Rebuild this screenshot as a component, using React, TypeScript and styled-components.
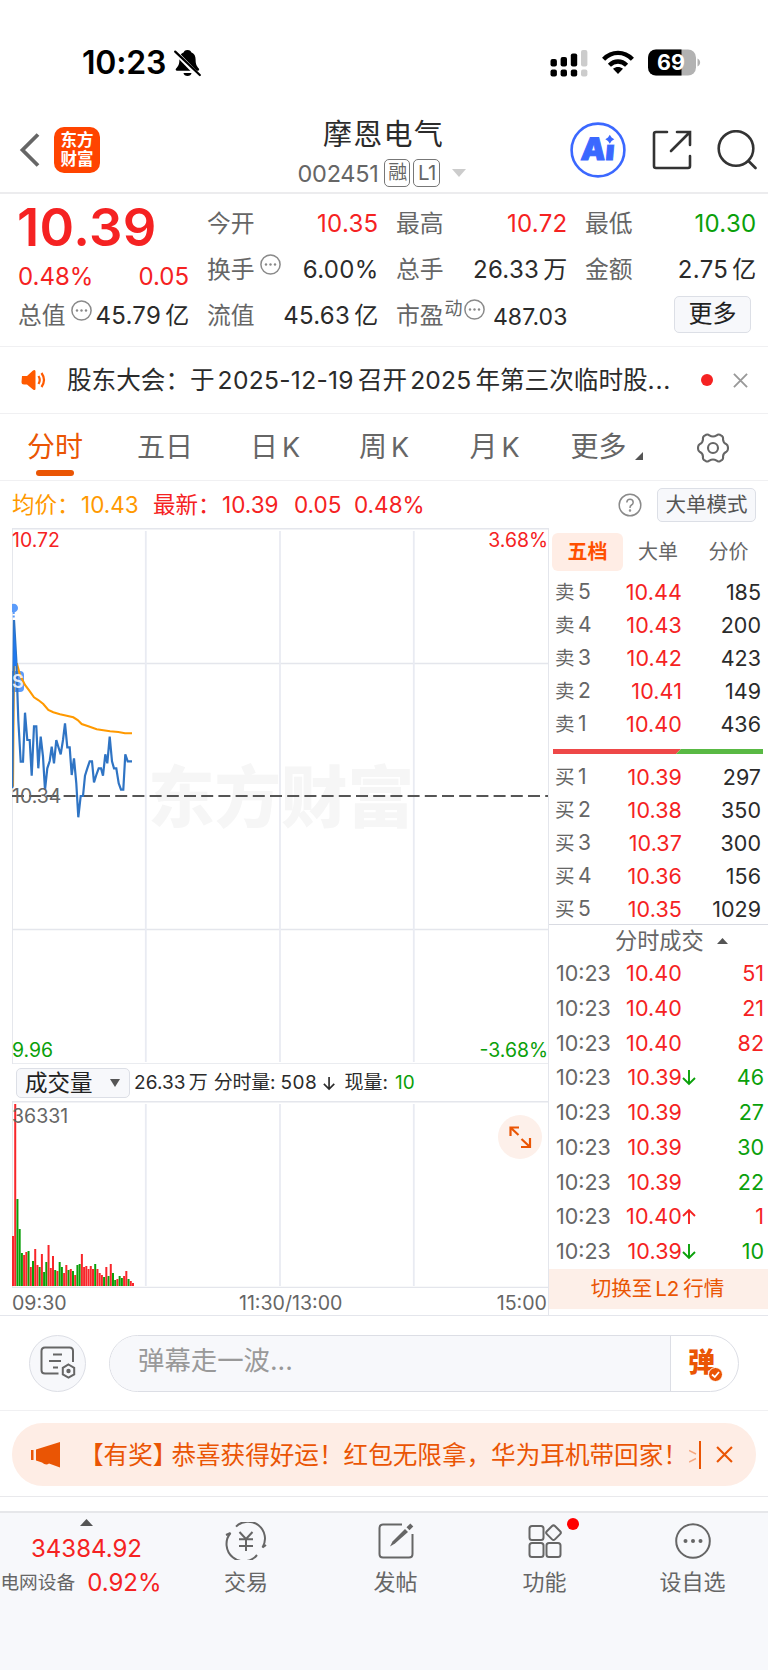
import React from "react";
import styled, { createGlobalStyle } from "styled-components";

const RED = "#f52222";
const GREEN = "#0aa00a";
const ORANGE = "#ea5504";
const GRAY = "#666";
const DARK = "#2b2b2b";
const LINE = "#e4e6ec";
const FONT = `Inter, "Noto Sans CJK SC", sans-serif`;

const Global = createGlobalStyle`
  *, *::before, *::after { box-sizing: border-box; }
  body { margin: 0; background: #fff; }
`;

const Screen = styled.main`
  width: 768px;
  height: 1670px;
  overflow: hidden;
  display: flex;
  flex-direction: column;
  background: #fff;
  color: ${DARK};
  font-family: ${FONT};
  text-autospace: no-autospace;
  white-space: nowrap;
  svg { display: block; flex: none; }
  svg text { font-family: ${FONT}; }
`;

/* ---------- status bar ---------- */
const StatusBar = styled.div`
  height: 106px;
  padding: 19px 67px 0 82px;
  display: flex;
  align-items: center;
  justify-content: space-between;
  color: #000;
`;
const Clock = styled.div`
  display: flex;
  align-items: center;
  gap: 8px;
  font-size: 32px;
  font-weight: 600;
  line-height: 40px;
  letter-spacing: -0.2px;
`;
const StatusIcons = styled.div`
  display: flex;
  align-items: center;
  gap: 14px;
`;

/* ---------- header ---------- */
const Header = styled.header`
  height: 88px;
  padding: 0 11px 0 18px;
  display: grid;
  grid-template-columns: 182px 1fr 190px;
  border-bottom: 2px solid #ececee;
`;
const HeaderLeft = styled.div`
  display: flex;
  align-items: center;
  gap: 13px;
  padding-top: 1px;
`;
const Logo = styled.div`
  width: 46px;
  height: 46px;
  border-radius: 10px;
  background: #ff4400;
  color: #fff;
  font-size: 16.5px;
  line-height: 19px;
  font-weight: 700;
  padding: 4px 0 0 0;
  text-align: center;
`;
const HeaderTitle = styled.div`
  display: flex;
  flex-direction: column;
  align-items: center;
  padding-top: 11px;
`;
const StockName = styled.h1`
  margin: 0;
  font-size: 29px;
  line-height: 36px;
  font-weight: 400;
  letter-spacing: 1.2px;
`;
const StockMeta = styled.div`
  display: flex;
  align-items: center;
  height: 32px;
  margin-top: 4px;
  margin-left: -3px;
  font-size: 23.5px;
  color: ${GRAY};
  gap: 3px;
  letter-spacing: -0.3px;
`;
const StockCode = styled.span`
  margin-right: 3px;
`;
const Badge = styled.span<{ $w: number }>`
  width: ${(p) => p.$w}px;
  height: 28px;
  border: 1.5px solid #777;
  border-radius: 5px;
  font-size: ${(p) => (p.$w > 26 ? 20.5 : 19)}px;
  line-height: 25px;
  text-align: center;
  letter-spacing: -0.5px;
`;
const CaretSlot = styled.span`
  padding: 0 0 0 9px;
`;
const HeaderActions = styled.div`
  display: flex;
  align-items: center;
  justify-content: flex-end;
  gap: 25.5px;
  padding-top: 1px;
`;

/* ---------- quote ---------- */
const Quote = styled.section`
  height: 153px;
  padding: 0 13px 0 18px;
  display: grid;
  grid-template-columns: repeat(4, 170px);
  column-gap: 19px;
  border-bottom: 1px solid #f0f0f2;
`;
const QuoteCol = styled.div`
  padding-top: 7px;
`;
const BigPrice = styled.div`
  height: 53px;
  margin-left: -1px;
  line-height: 52px;
  font-size: 52.5px;
  font-weight: 600;
  color: ${RED};
  letter-spacing: 0.4px;
`;
const ChangeLine = styled.div`
  display: flex;
  justify-content: space-between;
  height: 46px;
  margin-right: -1px;
  line-height: 46px;
  font-size: 24px;
  color: ${RED};
`;
const Cell = styled.div`
  display: flex;
  align-items: center;
  justify-content: space-between;
  height: 46px;
  line-height: 46px;
  font-size: 24px;
`;
const CapCell = styled(Cell)`
  height: 32px;
  line-height: 32px;
`;
const Label = styled.span`
  display: flex;
  align-items: center;
  color: ${GRAY};
  font-size: 23.8px;
`;
const Sup = styled.span`
  display: flex;
  align-items: center;
  gap: 1px;
  margin: -14px 0 0 1px;
  font-size: 18px;
`;
const SupIcon = styled.span`
  margin: -11px 0 0 5px;
`;
const Value = styled.span<{ $c?: string }>`
  display: flex;
  gap: 4px;
  margin-right: -1.5px;
  letter-spacing: 0.3px;
  color: ${(p) => p.$c || DARK};
`;
const SmallValue = styled(Value)`
  padding-top: 1px;
  font-size: 23px;
  letter-spacing: 0.1px;
`;
const MoreButton = styled.button`
  width: 77px;
  height: 37px;
  margin: -4px 4px 0 auto;
  padding: 0;
  border: 1.5px solid #dcdfe6;
  border-radius: 5px;
  background: #f7f8fb;
  font: 400 24px/32px ${FONT};
  color: #222;
`;

/* ---------- news ---------- */
const News = styled.section`
  height: 67px;
  padding: 0 19px 0 20px;
  display: flex;
  align-items: center;
  border-bottom: 1px solid #f0f0f2;
`;
const NewsText = styled.p`
  margin: 0 0 0 19px;
  width: 634px;
  display: flex;
  font-size: 24.6px;
  line-height: 40px;
`;
const Digits = styled.span<{ $l?: number; $r?: number; $s?: number }>`
  margin-left: ${(p) => p.$l ?? 3}px;
  margin-right: ${(p) => p.$r ?? 4}px;
  letter-spacing: ${(p) => p.$s ?? 0}px;
`;
const RedDot = styled.i`
  width: 12px;
  height: 12px;
  margin-right: 20px;
  border-radius: 50%;
  background: ${RED};
`;

/* ---------- period tabs ---------- */
const Periods = styled.nav`
  height: 67px;
  display: grid;
  grid-template-columns: 110px 110px 110px 108px 113px 111px 1fr;
  border-bottom: 1px solid #f0f0f2;
  font-size: 28px;
  line-height: 67px;
  color: ${GRAY};
`;
const Period = styled.div<{ $on?: boolean }>`
  position: relative;
  display: flex;
  justify-content: center;
  gap: 4px;
  color: ${(p) => (p.$on ? ORANGE : GRAY)};
  ${(p) =>
    p.$on &&
    `&::after { content: ""; position: absolute; left: 36px; bottom: 5px; width: 38px; height: 6px; border-radius: 3px; background: ${ORANGE}; }`}
`;
const Latin = styled.span`
  font-size: 27px;
`;
const GearSlot = styled.div`
  display: flex;
  align-items: center;
  justify-content: center;
  padding-right: 4px;
`;
const CornerSlot = styled.span`
  padding: 38px 0 0 4px;
`;

/* ---------- indicators ---------- */
const Indicators = styled.div`
  height: 47px;
  padding: 0 12px;
  display: flex;
  align-items: center;
  font-size: 22.5px;
  line-height: 40px;
  color: ${RED};
`;
const Item = styled.span<{ $c?: string; $w: number }>`
  width: ${(p) => p.$w}px;
  color: ${(p) => p.$c || RED};
`;
const ModeButton = styled(MoreButton)`
  width: 99px;
  height: 34px;
  margin: 0 0 0 15px;
  font-size: 20.5px;
  line-height: 30px;
  color: #555;
`;
const HelpSlot = styled.span`
  margin-left: auto;
`;

/* ---------- chart area ---------- */
const Body = styled.section`
  height: 788px;
  display: grid;
  grid-template-columns: 549px 219px;
  border-bottom: 1px solid ${LINE};
`;
const ChartCol = styled.div`
  padding-left: 12px;
  border-right: 1px solid ${LINE};
`;
const VolumeBar = styled.div`
  height: 37px;
  padding: 1px 0 0 4px;
  display: flex;
  align-items: center;
  font-size: 19px;
  line-height: 32px;
`;
const VolumeSelect = styled.div`
  width: 114px;
  height: 30px;
  margin-right: 4px;
  padding: 0 9px 0 8px;
  display: flex;
  align-items: center;
  justify-content: space-between;
  border: 1.5px solid #dcdfe6;
  border-radius: 5px;
  background: #f7f8fb;
  font-size: 22.5px;
  color: #222;
`;
const Axis = styled.div`
  height: 27px;
  display: flex;
  justify-content: space-between;
  padding-right: 1px;
  font-size: 19.6px;
  line-height: 31px;
  color: ${GRAY};
`;
const MidTime = styled.span`
  margin-left: 18px;
`;

const Side = styled.aside`
  display: flex;
  flex-direction: column;
`;
const BookTabs = styled.div`
  margin: 5px 0 0 3px;
  height: 38px;
  display: grid;
  grid-template-columns: 71px 70px 71px;
`;
const BookTab = styled.div<{ $on?: boolean }>`
  border-radius: 6px;
  background: ${(p) => (p.$on ? "#ffede5" : "transparent")};
  color: ${(p) => (p.$on ? "#ff5000" : GRAY)};
  font-weight: ${(p) => (p.$on ? 700 : 400)};
  font-size: 20px;
  line-height: 38px;
  text-align: center;
`;
const Level = styled.div`
  height: 32.9px;
  line-height: 32.9px;
  display: grid;
  grid-template-columns: 22px 28px 77px 1fr;
  padding: 0 7px 0 6px;
  font-size: 21.5px;
`;
const LevelName = styled.span`
  color: ${GRAY};
  font-size: 19.5px;
`;
const LevelNo = styled.span`
  color: ${GRAY};
  padding-left: 1px;
  font-size: 21px;
`;
const Price = styled.span`
  color: ${RED};
  text-align: right;
  letter-spacing: 0.1px;
`;
const Qty = styled.span<{ $c?: string }>`
  color: ${(p) => p.$c || DARK};
  text-align: right;
`;
const Sells = styled.div`
  padding-top: 5px;
  height: 178px;
`;
const Buys = styled.div`
  height: 171px;
  padding-top: 7px;
  border-bottom: 1px solid #d9dbe2;
`;
const TicksTitle = styled.div`
  height: 31px;
  padding-left: 66px;
  display: flex;
  align-items: center;
  gap: 13px;
  font-size: 22.2px;
  line-height: 31px;
  color: ${GRAY};
`;
const Tick = styled.div`
  height: 34.75px;
  line-height: 34.75px;
  display: grid;
  grid-template-columns: 57px 69px 15px 1fr;
  align-items: center;
  padding: 0 4px 0 7px;
  font-size: 21.5px;
`;
const TickTime = styled.span`
  color: ${GRAY};
`;
const L2Banner = styled.div`
  height: 40px;
  display: flex;
  justify-content: center;
  padding-right: 2px;
  background: #fdefe8;
  color: ${ORANGE};
  font-size: 20.5px;
  line-height: 39px;
`;

/* ---------- comment & banner ---------- */
const CommentRow = styled.section`
  height: 95px;
  padding: 0 29px;
  display: flex;
  align-items: center;
  gap: 23px;
  border-bottom: 1px solid #f0f0f2;
`;
const RoundButton = styled.div`
  width: 57px;
  height: 57px;
  display: flex;
  align-items: center;
  justify-content: center;
  border: 1px solid #dcdee5;
  border-radius: 50%;
  background: #f7f8fb;
`;
const CommentBox = styled.div`
  width: 630px;
  height: 57px;
  display: flex;
  overflow: hidden;
  border: 1px solid #dcdee5;
  border-radius: 29px;
`;
const CommentInput = styled.div`
  flex: 1;
  padding-left: 28px;
  background: #f7f8fb;
  color: #999;
  font-size: 26.4px;
  line-height: 49px;
  border-right: 1px solid #dcdee5;
`;
const DanmuButton = styled.div`
  width: 67px;
  position: relative;
  padding-left: 17px;
  color: ${ORANGE};
  font-size: 27px;
  font-weight: 900;
  line-height: 53px;
`;
const CheckMark = styled.span`
  position: absolute;
  left: 37px;
  top: 31px;
`;
const PromoWrap = styled.section`
  height: 86px;
  padding: 12px;
  border-bottom: 1px solid #e9e9ec;
`;
const Promo = styled.div`
  height: 63px;
  padding: 0 23px 0 18px;
  display: flex;
  align-items: center;
  border-radius: 31px;
  background: #feede5;
  color: ${ORANGE};
`;
const PromoText = styled.span`
  margin-left: 18px;
  font-size: 24.6px;
  line-height: 40px;
`;
const PromoTag = styled.span`
  margin-right: -6px;
`;
const PromoEnd = styled.span`
  display: flex;
  align-items: center;
  margin-left: auto;
  gap: 15px;
`;

/* ---------- bottom tab bar ---------- */
const TabBar = styled.footer`
  margin-top: 14px;
  flex: 1;
  padding-top: 3px;
  display: grid;
  grid-template-columns: 171px 150px 149px 149px 147px;
  border-top: 2px solid #e6e7ea;
  background: #f7f8fb;
`;
const IndexTab = styled.div`
  display: flex;
  flex-direction: column;
  align-items: center;
  color: ${RED};
  font-size: 24px;
  padding: 3px 0 0 2px;
`;
const IndexValue = styled.div`
  margin-top: 6px;
  line-height: 34px;
`;
const IndexLine = styled.div`
  display: flex;
  align-items: center;
  gap: 12px;
  line-height: 34px;
  padding-right: 11px;
`;
const IndexName = styled.span`
  font-size: 18.7px;
  color: ${GRAY};
`;
const Tab = styled.div`
  position: relative;
  display: flex;
  flex-direction: column;
  align-items: center;
  padding-top: 3px;
  color: ${GRAY};
  font-size: 22px;
  line-height: 32px;
`;
const TabIcon = styled.div`
  height: 48px;
  display: flex;
  align-items: center;
  margin-bottom: -1px;
  padding-bottom: 4px;
`;
const TabDot = styled.i`
  position: absolute;
  top: 2px;
  left: 97px;
  width: 12px;
  height: 12px;
  border-radius: 50%;
  background: #ff0000;
`;

const Dots = () => (
  <svg width="21" height="21" viewBox="0 0 21 21" fill="#888">
    <circle cx="10.5" cy="10.5" r="9.6" fill="none" stroke="#8a8a8a" strokeWidth="1.5" />
    <circle cx="6" cy="10.5" r="1.2" /><circle cx="10.5" cy="10.5" r="1.2" /><circle cx="15" cy="10.5" r="1.2" />
  </svg>
);

const Cross = ({ color, size }: { color: string; size: number }) => (
  <svg width={size} height={size} viewBox="0 0 16 16" stroke={color} strokeWidth="2" fill="none">
    <path d="M1 1L15 15M15 1L1 15" />
  </svg>
);

const PRICE: number[][] = [[37,805],[42,300],[49,420],[55,600],[62,725],[69,725],[75,578],[82,660],[89,660],[95,767],[102,619],[109,619],[115,745],[122,650],[129,710],[135,810],[142,745],[149,723],[155,680],[162,730],[169,660],[175,680],[182,703],[189,660],[195,610],[202,682],[209,682],[215,765],[222,715],[229,790],[235,892],[242,828],[249,828],[255,767],[262,745],[269,724],[276,724],[282,787],[289,765],[296,745],[303,745],[309,767],[316,703],[322,730],[329,650],[336,724],[342,745],[349,745],[356,790],[363,809],[370,809],[376,703],[383,724],[396,724]];
const AVG: number[][] = [[39,800],[42,430],[51,432],[60,465],[75,495],[88,512],[102,532],[115,540],[130,552],[145,570],[160,577],[180,583],[200,587],[220,592],[233,600],[245,612],[265,619],[290,628],[330,634],[355,636],[375,640],[396,640]];
const toPoints = (list: number[][]) =>
  list.map(([x, y]) => `${(x / 3).toFixed(1)},${(520 + y / 3).toFixed(1)}`).join(" ");

const VOLUMES =
  "50r182r87g57g33g31r34r35g19r25g37r21r19g32r14g24g41r18r30r16g15r24g19g13r21r16g17r15g11r21g22g32r19r20r17r20r17r22g17r13r11r9g19r10g22r13g6g7r10g8g10r15r7g5r3r";
const volumeBars = (VOLUMES.match(/\d+[rg]/g) || []).map((v) => ({
  h: parseInt(v, 10),
  color: v.endsWith("r") ? "#f8262a" : "#0aa00a",
}));

const PriceChart = () => (
  <svg width="536" height="536" viewBox="12 528 536 536">
    <g stroke={LINE} strokeWidth="1.5" fill="none">
      <path d="M12 528.7H548M12.2 528V1064M12 663.5H548M12 929.5H548M12 1064H548" />
      <path d="M145.8 531V1062M280 531V1062M413.8 531V1062" stroke="#e9ebf2" strokeWidth="1.8" />
    </g>
    <text x="148" y="822" fontSize="66.5" fontWeight="900" fill="#f6f6f6">东方财富</text>
    <path d="M12 796H548" stroke="#555" strokeWidth="1.8" strokeDasharray="12 5.2" />
    <circle cx="13.7" cy="608" r="4.3" fill="#5a9bfa" />
    <path d="M13.7 612V618" stroke="#5a9bfa" strokeWidth="2" strokeDasharray="2 1.5" />
    <rect x="2" y="671" width="22" height="21" rx="4" fill="#5a9bfa" />
    <polyline points={toPoints(AVG)} fill="none" stroke="#ff9900" strokeWidth="2.1" />
    <polyline points={toPoints(PRICE)} fill="none" stroke="#2f74c4" strokeWidth="2.2" />
    <path d="M14 624L17 666L13 666Z" fill="#1f78ee" />
    <text x="12" y="688" fontSize="18" fontWeight="600" fill="#fff" fillOpacity="0.85">S</text>
    <g fontSize="19.4">
      <text x="12" y="547.2" fill={RED}>10.72</text>
      <text x="548" y="547.2" fill={RED} textAnchor="end">3.68%</text>
      <text x="12" y="803" fill={GRAY}>10.34</text>
      <text x="12" y="1057.2" fill={GREEN}>9.96</text>
      <text x="548" y="1057.2" fill={GREEN} textAnchor="end">-3.68%</text>
    </g>
  </svg>
);

const VolumeChart = () => (
  <svg width="536" height="187" viewBox="12 1101 536 187">
    <path d="M12 1101.7H548M12.2 1101V1288M12 1287.4H548" stroke={LINE} strokeWidth="1.5" />
    <path d="M145.8 1104V1286M280 1104V1286M413.8 1104V1286" stroke="#e9ebf2" strokeWidth="1.8" />
    {volumeBars.map((b, i) => (
      <rect key={i} x={12 + i * 2.222} y={1286 - b.h} width="2" height={b.h} fill={b.color} />
    ))}
    <text x="12" y="1123" fontSize="19.5" fill={GRAY}>36331</text>
    <circle cx="520" cy="1137" r="22" fill="#fdf0ea" />
    <path d="M518.5 1135L510.5 1127.5M510.5 1136V1127.5H519M521.5 1139L530 1147M530 1138V1147H521" fill="none" stroke={ORANGE} strokeWidth="2.2" />
  </svg>
);

const Arrow = ({ up, color, size = 15 }: { up?: boolean; color: string; size?: number }) => (
  <svg width={size} height={size + 2} viewBox="0 0 15 17" fill="none" stroke={color} strokeWidth="1.9">
    <path d={up ? "M7 16V2M1 8L7 2L13 8" : "M7 1V15M1 9L7 15L13 9"} />
  </svg>
);

const sells = [["5", "10.44", "185"], ["4", "10.43", "200"], ["3", "10.42", "423"], ["2", "10.41", "149"], ["1", "10.40", "436"]];
const buys = [["1", "10.39", "297"], ["2", "10.38", "350"], ["3", "10.37", "300"], ["4", "10.36", "156"], ["5", "10.35", "1029"]];
const ticks: [string, string, string, string?][] = [
  ["10.40", "51", RED], ["10.40", "21", RED], ["10.40", "82", RED],
  ["10.39", "46", GREEN, "down"], ["10.39", "27", GREEN], ["10.39", "30", GREEN],
  ["10.39", "22", GREEN], ["10.40", "1", RED, "up"], ["10.39", "10", GREEN, "down"],
];

const Levels = ({ side, rows }: { side: string; rows: string[][] }) => (
  <>
    {rows.map(([n, price, qty]) => (
      <Level key={n}>
        <LevelName>{side}</LevelName>
        <LevelNo>{n}</LevelNo>
        <Price>{price}</Price>
        <Qty>{qty}</Qty>
      </Level>
    ))}
  </>
);

export default function App() {
  return (
    <Screen>
      <Global />
      <StatusBar>
        <Clock>
          10:23
          <svg width="27" height="28" viewBox="0 0 27 28">
            <path d="M13.5 1C16 1 17 2.3 17.2 3.3C20.4 4.5 21.6 7.3 21.6 10.5C21.6 15.5 22.8 17.3 24.8 19.5C25.6 20.6 25 21.7 23.8 21.7H3C1.8 21.7 1.2 20.6 2.1 19.5C4.2 17.3 5.4 15.5 5.4 10.5C5.4 7.3 6.6 4.5 9.8 3.3C10 2.3 11 1 13.5 1Z" fill="#000" />
            <path d="M9.5 24H17.5C17.3 25.8 15.6 27 13.5 27S9.7 25.8 9.5 24Z" fill="#000" />
            <path d="M0 1.8L25 27.4" stroke="#fff" strokeWidth="4.6" />
            <path d="M1.2 2.6L25.8 26" stroke="#000" strokeWidth="2.2" strokeLinecap="round" />
          </svg>
        </Clock>
        <StatusIcons>
          <svg width="38" height="28" viewBox="0 0 38 28">
            <g fill="#000">
              <rect x="0.5" y="10" width="6.4" height="7.4" rx="2" /><rect x="10.6" y="8" width="6.4" height="9.4" rx="2" /><rect x="20.8" y="4.5" width="6.4" height="12.9" rx="2" />
              <rect x="0.5" y="20.5" width="6.4" height="7" rx="2" /><rect x="10.6" y="20.5" width="6.4" height="7" rx="2" /><rect x="20.8" y="20.5" width="6.4" height="7" rx="2" />
            </g>
            <g fill="#ccc"><rect x="31" y="1" width="6.4" height="16.4" rx="2" /><rect x="31" y="20.5" width="6.4" height="7" rx="2" /></g>
          </svg>
          <svg width="32" height="25" viewBox="0 0 32 25" fill="none" stroke="#000" strokeWidth="4.4">
            <path d="M1.6 9.2C10 0.8 22 0.8 30.4 9.2" /><path d="M7.4 15.2C12.5 10.2 19.5 10.2 24.6 15.2" />
            <path d="M11 18.8C14 16.4 18 16.4 21 18.8L16 24Z" fill="#000" stroke="none" />
          </svg>
          <svg width="53" height="27" viewBox="0 0 53 27">
            <defs><clipPath id="level"><rect x="0" y="0.5" width="48" height="26" rx="8" /></clipPath></defs>
            <g clipPath="url(#level)"><rect width="48" height="27" fill="#b2b2b2" /><rect width="33.5" height="27" fill="#000" /></g>
            <path d="M49.5 9.5C53 11 53 16 49.5 17.5Z" fill="#b2b2b2" />
            <text x="23" y="21.4" fontSize="21.5" fontWeight="700" fill="#fff" textAnchor="middle">69</text>
          </svg>
        </StatusIcons>
      </StatusBar>

      <Header>
        <HeaderLeft>
          <svg width="23" height="36" viewBox="0 0 23 36" fill="none" stroke={GRAY} strokeWidth="3.8"><path d="M20 2.5L4.5 18L20 33.5" /></svg>
          <Logo>东方<br />财富</Logo>
        </HeaderLeft>
        <HeaderTitle>
          <StockName>摩恩电气</StockName>
          <StockMeta>
            <StockCode>002451</StockCode>
            <Badge $w={26}>融</Badge>
            <Badge $w={27}>L1</Badge>
            <CaretSlot><svg width="14" height="8" viewBox="0 0 14 8"><path d="M0 0H14L7 8Z" fill="#ccc" /></svg></CaretSlot>
          </StockMeta>
        </HeaderTitle>
        <HeaderActions>
          <svg width="56" height="56" viewBox="0 0 56 56">
            <circle cx="28" cy="28" r="26.4" fill="none" stroke="#3b68ff" strokeWidth="2.6" />
            <text x="10.5" y="38.5" fontSize="31" fontWeight="900" fill="#3b68ff" stroke="#3b68ff" strokeWidth="1" transform="skewX(-5) translate(3 0)">Ai</text>
            <rect x="34.5" y="13" width="12.5" height="9.6" fill="#fff" />
            <path d="M39.8 12.8L41.6 15.6L44.3 17.3L41.6 19L39.8 21.8L38 19L35.3 17.3L38 15.6Z" fill="#3b68ff" />
          </svg>
          <svg width="40" height="40" viewBox="0 0 40 40" fill="none" stroke="#333" strokeWidth="2.6" strokeLinecap="round">
            <path d="M15 2H4Q2 2 2 4V36Q2 38 4 38H36Q38 38 38 36V26" /><path d="M25 2H38V15M37 3L19 21" />
          </svg>
          <svg width="40" height="40" viewBox="0 0 40 40" fill="none" stroke="#333" strokeWidth="2.6" strokeLinecap="round">
            <circle cx="19" cy="18.5" r="17.3" /><path d="M31.5 31L38.5 38" />
          </svg>
        </HeaderActions>
      </Header>

      <Quote>
        <QuoteCol>
          <BigPrice>10.39</BigPrice>
          <ChangeLine><span>0.48%</span><span>0.05</span></ChangeLine>
          <CapCell>
            <Label>总值<SupIcon><Dots /></SupIcon></Label>
            <Value><span>45.79</span><span>亿</span></Value>
          </CapCell>
        </QuoteCol>
        <QuoteCol>
          <Cell><Label>今开</Label><Value $c={RED}>10.35</Value></Cell>
          <Cell><Label>换手<SupIcon><Dots /></SupIcon></Label><Value>6.00%</Value></Cell>
          <Cell><Label>流值</Label><Value><span>45.63</span><span>亿</span></Value></Cell>
        </QuoteCol>
        <QuoteCol>
          <Cell><Label>最高</Label><Value $c={RED}>10.72</Value></Cell>
          <Cell><Label>总手</Label><Value><span>26.33</span><span>万</span></Value></Cell>
          <Cell><Label>市盈<Sup>动<Dots /></Sup></Label><SmallValue>487.03</SmallValue></Cell>
        </QuoteCol>
        <QuoteCol>
          <Cell><Label>最低</Label><Value $c={GREEN}>10.30</Value></Cell>
          <Cell><Label>金额</Label><Value><span>2.75</span><span>亿</span></Value></Cell>
          <Cell><MoreButton>更多</MoreButton></Cell>
        </QuoteCol>
      </Quote>

      <News>
        <svg width="28" height="22" viewBox="0 0 28 22">
          <path d="M2 7H7L13 1.5Q15.5 0 15.5 2.5V19.5Q15.5 22 13 20.5L7 15.5H4Q1.5 15.5 1.5 13Z" fill="#ff5a00" />
          <path d="M18.5 7Q21 11 18.5 15M21.5 4Q26.5 11 21.5 18" fill="none" stroke="#ff5a00" strokeWidth="2.2" />
        </svg>
        <NewsText>股东大会：于<Digits $s={0.3}>2025-12-19</Digits>召开<Digits $s={0.2}>2025</Digits>年第三次临时股<Digits $l={0} $r={0} $s={0.8}>...</Digits></NewsText>
        <RedDot />
        <Cross color="#999" size={15} />
      </News>

      <Periods>
        <Period $on>分时</Period>
        <Period>五日</Period>
        <Period><span>日</span><Latin>K</Latin></Period>
        <Period><span>周</span><Latin>K</Latin></Period>
        <Period><span>月</span><Latin>K</Latin></Period>
        <Period>更多<CornerSlot><svg width="8" height="8" viewBox="0 0 8 8"><path d="M8 0V8H0Z" fill="#555" /></svg></CornerSlot></Period>
        <GearSlot>
          <svg width="32" height="30" viewBox="0 0 32 30" fill="none" stroke={GRAY} strokeWidth="2.1" strokeLinejoin="round">
            <path d="M9 1.8Q11 1 12.4 2.4Q16 4.6 19.6 2.4Q21 1 23 1.8L25.2 3.2Q26.4 4.4 26 6.2Q26.2 10 29.4 11.2Q31 12 31 15T29.4 18.8Q26.2 20 26 23.8Q26.4 25.6 25.2 26.8L23 28.2Q21 29 19.6 27.6Q16 25.4 12.4 27.6Q11 29 9 28.2L6.8 26.8Q5.6 25.6 6 23.8Q5.8 20 2.6 18.8Q1 18 1 15T2.6 11.2Q5.8 10 6 6.2Q5.6 4.4 6.8 3.2Z" />
            <circle cx="16" cy="15" r="5" />
          </svg>
        </GearSlot>
      </Periods>

      <Indicators>
        <Item $w={69} $c="#ff9900">均价：</Item><Item $w={72} $c="#ff9900">10.43</Item>
        <Item $w={69}>最新：</Item><Item $w={72}>10.39</Item><Item $w={60}>0.05</Item><Item $w={75}>0.48%</Item>
        <HelpSlot>
          <svg width="24" height="24" viewBox="0 0 24 24" fill="none" stroke="#8a8a8a" strokeWidth="1.5">
            <circle cx="12" cy="12" r="10.8" /><path d="M8.8 9.5Q9 6.3 12 6.3T15.2 9.3Q15.2 11 13.5 12T12 15" /><circle cx="12" cy="17.6" r="0.5" />
          </svg>
        </HelpSlot>
        <ModeButton>大单模式</ModeButton>
      </Indicators>

      <Body>
        <ChartCol>
          <PriceChart />
          <VolumeBar>
            <VolumeSelect>成交量<svg width="10" height="8" viewBox="0 0 10 8"><path d="M0 0H10L5 8Z" fill="#555" /></svg></VolumeSelect>
            <Digits $l={0} $r={3} $s={0.1}>26.33</Digits>万
            <Digits $l={6} $r={5} $s={-0.2}>分时量:</Digits><Digits $l={0} $r={6} $s={0.6}>508</Digits>
            <Arrow color={DARK} size={13} />
            <Digits $l={8} $r={7}>现量:</Digits><Item $w={30} $c={GREEN}>10</Item>
          </VolumeBar>
          <VolumeChart />
          <Axis><span>09:30</span><MidTime>11:30/13:00</MidTime><span>15:00</span></Axis>
        </ChartCol>
        <Side>
          <BookTabs><BookTab $on>五档</BookTab><BookTab>大单</BookTab><BookTab>分价</BookTab></BookTabs>
          <Sells><Levels side="卖" rows={sells} /></Sells>
          <svg width="219" height="5" viewBox="0 0 219 5"><path d="M4 0H132L127 5H4Z" fill="#ee4848" /><path d="M132 0H214V5H127Z" fill="#59b944" /></svg>
          <Buys><Levels side="买" rows={buys} /></Buys>
          <TicksTitle>分时成交<svg width="11" height="6" viewBox="0 0 11 6"><path d="M0 6H11L5.5 0Z" fill="#555" /></svg></TicksTitle>
          {ticks.map(([price, qty, color, dir], i) => (
            <Tick key={i}>
              <TickTime>10:23</TickTime>
              <Price>{price}</Price>
              {dir ? <Arrow up={dir === "up"} color={dir === "up" ? RED : GREEN} /> : <span />}
              <Qty $c={color}>{qty}</Qty>
            </Tick>
          ))}
          <L2Banner>切换至<Digits>L2</Digits>行情</L2Banner>
        </Side>
      </Body>

      <CommentRow>
        <RoundButton>
          <svg width="36" height="34" viewBox="0 0 36 34" fill="none" stroke={GRAY} strokeWidth="2">
            <path d="M18.5 27.5H5Q1.5 27.5 1.5 24V5Q1.5 1.5 5 1.5H29.5Q33 1.5 33 5V16" />
            <path d="M13 8.5H22M9 15H21M13 21.5H18" />
            <path d="M28.5 18.5L34.2 21.8V28.3L28.5 31.6L22.8 28.3V21.8Z" /><circle cx="28.5" cy="25" r="1.2" fill={GRAY} />
          </svg>
        </RoundButton>
        <CommentBox>
          <CommentInput>弹幕走一波...</CommentInput>
          <DanmuButton>
            弹
            <CheckMark><svg width="15" height="15" viewBox="0 0 15 15"><circle cx="7.5" cy="7.5" r="7" fill={ORANGE} stroke="#fff" /><path d="M4 7.5L6.8 10L11 5" fill="none" stroke="#fff" strokeWidth="1.8" /></svg></CheckMark>
          </DanmuButton>
        </CommentBox>
      </CommentRow>

      <PromoWrap>
        <Promo>
          <svg width="31" height="26" viewBox="0 0 31 26" fill={ORANGE}><path d="M1 8H3.5V18H1ZM6 7.5L30 0V25.5L19 21.5Q16 24 12 20.5L6 18.5Z" /></svg>
          <PromoText><PromoTag>【有奖】</PromoTag>恭喜获得好运！红包无限拿，华为耳机带回家！</PromoText>
          <PromoEnd>
            <svg width="12" height="28" viewBox="0 0 12 28" fill="none" stroke={ORANGE}><path d="M0 9.5L7 13M0 21L7 17.5" opacity="0.45" strokeWidth="1.5" /><path d="M11 0V28" strokeWidth="2" /></svg>
            <Cross color={ORANGE} size={17} />
          </PromoEnd>
        </Promo>
      </PromoWrap>

      <TabBar>
        <IndexTab>
          <svg width="13" height="7" viewBox="0 0 13 7"><path d="M0 7H13L6.5 0Z" fill="#555" /></svg>
          <IndexValue>34384.92</IndexValue>
          <IndexLine><IndexName>电网设备</IndexName>0.92%</IndexLine>
        </IndexTab>
        <Tab>
          <TabIcon>
            <svg width="42" height="38" viewBox="0 0 42 38" fill="none" stroke={GRAY} strokeWidth="2">
              <path d="M11 4.6A17 17 0 0 1 37.5 25.5L41 23M32 33A17 17 0 0 1 5.5 11L1 13" />
              <path d="M14.5 10L21 17L27.5 10M14 17.2H28M14 24H28M21 17V29" />
            </svg>
          </TabIcon>
          交易
        </Tab>
        <Tab>
          <TabIcon>
            <svg width="36" height="36" viewBox="0 0 36 36" fill="none" stroke={GRAY} strokeWidth="2">
              <path d="M24 1.5H5Q1.5 1.5 1.5 5V31Q1.5 34.5 5 34.5H31Q34.5 34.5 34.5 31V11" />
              <path d="M12 23.5L14.5 18.5L27 6L30 9L17 20.5Z" fill={GRAY} stroke="none" /><path d="M30 5.8L33.8 2" strokeWidth="4.2" />
            </svg>
          </TabIcon>
          发帖
        </Tab>
        <Tab>
          <TabDot />
          <TabIcon>
            <svg width="34" height="36" viewBox="0 0 34 36" fill="none" stroke={GRAY} strokeWidth="2">
              <rect x="1.5" y="3" width="14" height="14" rx="2.5" /><rect x="1.5" y="20" width="14" height="14" rx="2.5" /><rect x="18.5" y="20" width="14" height="14" rx="2.5" />
              <rect x="19.8" y="4" width="11.4" height="11.4" rx="2" transform="rotate(45 25.5 9.7)" />
            </svg>
          </TabIcon>
          功能
        </Tab>
        <Tab>
          <TabIcon>
            <svg width="36" height="36" viewBox="0 0 36 36" fill={GRAY}>
              <circle cx="18" cy="18" r="16.8" fill="none" stroke={GRAY} strokeWidth="2" />
              <circle cx="10.5" cy="18" r="2" /><circle cx="18" cy="18" r="2" /><circle cx="25.5" cy="18" r="2" />
            </svg>
          </TabIcon>
          设自选
        </Tab>
      </TabBar>
    </Screen>
  );
}
